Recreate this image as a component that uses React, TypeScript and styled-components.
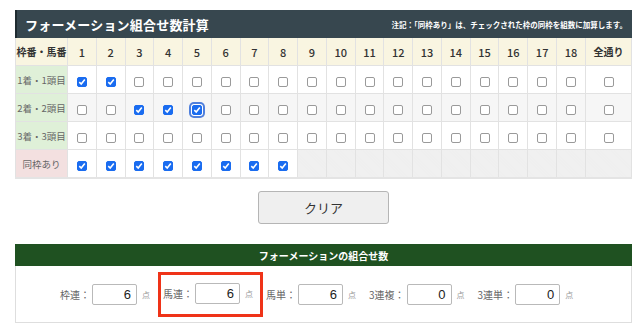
import React from "react";
import styled, { createGlobalStyle, css } from "styled-components";

const GlobalStyle = createGlobalStyle`
  body {
    margin: 0;
    background: #fff;
    font-family: "Noto Sans CJK JP", "Noto Sans", sans-serif;
    color: #333;
  }
`;

const Page = styled.div`
  width: 640px;
  height: 324px;
  padding: 10px 8px 0 15px;
  box-sizing: border-box;
`;

const TitleBar = styled.div`
  height: 28px;
  background: #37474f;
  border-left: 2px solid #1f2b30;
  display: flex;
  align-items: center;
  justify-content: space-between;
  padding: 0 5px 0 8px;
  color: #fff;
  font-weight: 700;
`;

const Title = styled.h1`
  margin: 0;
  font-size: 13px;
  letter-spacing: 0.2px;
`;

const Note = styled.span`
  font-size: 7.5px;
`;

const Grid = styled.table`
  width: 100%;
  border-collapse: collapse;
  table-layout: fixed;
  border-bottom: 2px solid #e4e4e4;
`;

const Head = styled.th<{ $wide?: boolean }>`
  height: 27px;
  background: #f9f5e1;
  border: 1px solid #e2e2e2;
  border-top: none;
  font-size: ${(p) => (p.$wide ? "10px" : "11px")};
  font-weight: ${(p) => (p.$wide ? 700 : 500)};
  color: #333;
  padding: 0;
`;

const Row = styled.tr<{ $alt?: boolean }>`
  background: ${(p) => (p.$alt ? "#f6f6f6" : "#fff")};
`;

const Label = styled.td<{ $pink?: boolean }>`
  height: 27px;
  border: 1px solid #e2e2e2;
  background: ${(p) => (p.$pink ? "#f3e0e0" : "#dff0d8")};
  color: #666;
  font-size: 9.5px;
  text-align: center;
  padding: 0;
`;

const Cell = styled.td<{ $off?: boolean }>`
  border: 1px solid #e2e2e2;
  text-align: center;
  padding: 0;
  ${(p) =>
    p.$off &&
    css`
      background: repeating-linear-gradient(45deg, #eeeeee 0 1px, #f1f1f1 1px 2px);
    `}
`;

const Box = styled.span<{ $on?: boolean; $focus?: boolean }>`
  display: inline-block;
  width: 10px;
  height: 10px;
  box-sizing: border-box;
  border-radius: 2px;
  vertical-align: middle;
  border: 1px solid ${(p) => (p.$on ? "#1a6cf0" : "#9a9a9a")};
  background: ${(p) => (p.$on ? "#1a6cf0" : "#fff")};
  position: relative;
  ${(p) =>
    p.$focus &&
    css`
      box-shadow: 0 0 0 1px #fff, 0 0 0 3px #4f7fdc;
    `}
  svg {
    position: absolute;
    left: 0;
    top: 0;
  }
`;

const Check: React.FC<{ on?: boolean; focus?: boolean }> = ({ on, focus }) => (
  <Box $on={on} $focus={focus}>
    {on && (
      <svg width="8" height="8" viewBox="0 0 8 8">
        <path d="M1.3 4.2 L3.2 6 L6.8 1.6" fill="none" stroke="#fff" strokeWidth="1.6" />
      </svg>
    )}
  </Box>
);

const Actions = styled.div`
  display: flex;
  justify-content: center;
  padding: 12px 0 20px;
`;

const ClearButton = styled.button`
  width: 131px;
  height: 33px;
  background: #efefef;
  border: 1px solid #b5b5b5;
  border-radius: 3px;
  font-family: inherit;
  font-size: 13px;
  color: #333;
`;

const ResultHead = styled.div`
  height: 22px;
  background: #1f5121;
  color: #fff;
  font-size: 10px;
  font-weight: 700;
  display: flex;
  align-items: center;
  justify-content: center;
`;

const ResultBody = styled.div`
  height: 56px;
  border: 1px solid #dedede;
  border-top: none;
  display: flex;
  align-items: center;
  padding-left: 44px;
  gap: 13px;
`;

const Item = styled.span<{ $mark?: boolean }>`
  display: flex;
  align-items: center;
  font-size: 10px;
  color: #666;
  ${(p) =>
    p.$mark &&
    css`
      border: 3px solid #ef3318;
      padding: 8px 7px 10px 2px;
      margin: 0 -10px 0 -5px;
    `}
`;

const Num = styled.span`
  width: 45px;
  height: 21px;
  box-sizing: border-box;
  border: 1px solid #b9b9b9;
  border-radius: 2px;
  margin-left: 2px;
  padding-right: 5px;
  text-align: right;
  font-family: "Liberation Sans", sans-serif;
  font-size: 13px;
  line-height: 20px;
  color: #222;
`;

const Unit = styled.span`
  font-size: 8px;
  color: #999;
  margin-left: 5px;
`;

const cols = Array.from({ length: 18 }, (_, i) => i + 1);
const rows = [
  { label: "1着・1頭目", on: [1, 2], alt: false },
  { label: "2着・2頭目", on: [3, 4, 5], alt: true, focus: 5 },
  { label: "3着・3頭目", on: [] as number[], alt: false },
];
const counts = [
  { label: "枠連", value: 6 },
  { label: "馬連", value: 6, mark: true },
  { label: "馬単", value: 6 },
  { label: "3連複", value: 0 },
  { label: "3連単", value: 0 },
];

export default function App() {
  return (
    <Page>
      <GlobalStyle />
      <TitleBar>
        <Title>フォーメーション組合せ数計算</Title>
        <Note>注記：「同枠あり」は、チェックされた枠の同枠を組数に加算します。</Note>
      </TitleBar>
      <Grid>
        <colgroup>
          <col style={{ width: 52 }} />
          {cols.map((c) => (
            <col key={c} />
          ))}
          <col style={{ width: 46 }} />
        </colgroup>
        <thead>
          <tr>
            <Head $wide>枠番・馬番</Head>
            {cols.map((c) => (
              <Head key={c}>{c}</Head>
            ))}
            <Head $wide>全通り</Head>
          </tr>
        </thead>
        <tbody>
          {rows.map((r) => (
            <Row key={r.label} $alt={r.alt}>
              <Label>{r.label}</Label>
              {cols.map((c) => (
                <Cell key={c}>
                  <Check on={r.on.includes(c)} focus={r.focus === c} />
                </Cell>
              ))}
              <Cell>
                <Check />
              </Cell>
            </Row>
          ))}
          <Row>
            <Label $pink>同枠あり</Label>
            {cols.map((c) => (
              <Cell key={c} $off={c > 8}>
                {c <= 8 && <Check on />}
              </Cell>
            ))}
            <Cell $off />
          </Row>
        </tbody>
      </Grid>
      <Actions>
        <ClearButton>クリア</ClearButton>
      </Actions>
      <ResultHead>フォーメーションの組合せ数</ResultHead>
      <ResultBody>
        {counts.map((c) => (
          <Item key={c.label} $mark={c.mark}>
            {c.label}：<Num>{c.value}</Num>
            <Unit>点</Unit>
          </Item>
        ))}
      </ResultBody>
    </Page>
  );
}
